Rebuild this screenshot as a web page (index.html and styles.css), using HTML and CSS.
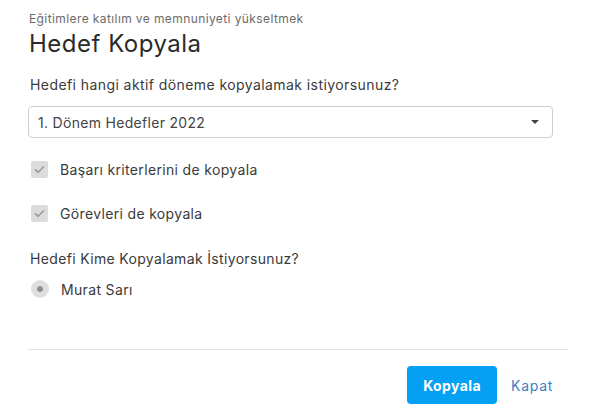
FILE: index.html
```html
<!DOCTYPE html>
<html lang="tr">
<head>
<meta charset="utf-8">
<link rel="stylesheet" href="styles.css">
</head>
<body>
<div class="modal">
  <div class="header">
    <div class="subtitle">Eğitimlere katılım ve memnuniyeti yükseltmek</div>
    <h1 class="title">Hedef Kopyala</h1>
  </div>
  <div class="content">
    <div class="label">Hedefi hangi aktif döneme kopyalamak istiyorsunuz?</div>
    <div class="select">
      <span class="select-text">1. Dönem Hedefler 2022</span>
      <span class="caret"></span>
    </div>
    <div class="check-row first">
      <span class="checkbox">
        <svg width="11" height="9" viewBox="0 0 11 9"><path d="M1.5 4.8 L4.2 7.3 L9.5 1.8" fill="none" stroke="#9a9a9a" stroke-width="1.6" stroke-linecap="round" stroke-linejoin="round"/></svg>
      </span>
      <span class="check-label">Başarı kriterlerini de kopyala</span>
    </div>
    <div class="check-row">
      <span class="checkbox">
        <svg width="11" height="9" viewBox="0 0 11 9"><path d="M1.5 4.8 L4.2 7.3 L9.5 1.8" fill="none" stroke="#9a9a9a" stroke-width="1.6" stroke-linecap="round" stroke-linejoin="round"/></svg>
      </span>
      <span class="check-label">Görevleri de kopyala</span>
    </div>
    <div class="label second">Hedefi Kime Kopyalamak İstiyorsunuz?</div>
    <div class="radio-row">
      <span class="radio"><span class="dot"></span></span>
      <span class="check-label">Murat Sarı</span>
    </div>
  </div>
  <div class="footer">
    <button class="btn-primary">Kopyala</button>
    <a class="btn-link">Kapat</a>
  </div>
</div>
</body>
</html>
```
FILE: styles.css
```css
html, body {
  margin: 0;
  padding: 0;
  background: #ffffff;
}
body {
  font-family: Inter, "Noto Sans", sans-serif;
  color: #333333;
  width: 591px;
  height: 416px;
  overflow: hidden;
}
.modal {
  padding: 11px 23px 0 28px;
}
.header {
  padding-left: 1px;
}
.subtitle {
  font-size: 12px;
  line-height: 16px;
  letter-spacing: 0.4px;
  color: #6b6b6b;
}
.title {
  margin: 2px 0 0 0;
  font-size: 24px;
  line-height: 30px;
  font-weight: 400;
  letter-spacing: 0.5px;
  color: #2b2b2b;
}
.content {
  padding: 0 15px 0 0;
}
.label {
  margin-top: 17px;
  padding-left: 2px;
  font-size: 14px;
  line-height: 18px;
  letter-spacing: 0.42px;
  color: #3a3a3a;
}
.label.second {
  margin-top: 28px;
  letter-spacing: 0.34px;
}
.select {
  margin-top: 12px;
  height: 32px;
  box-sizing: border-box;
  border: 1px solid #c9ced8;
  border-radius: 4px;
  display: flex;
  align-items: center;
  justify-content: space-between;
  padding: 0 13px 0 9px;
}
.select-text {
  font-size: 14px;
  letter-spacing: 0.3px;
  color: #444444;
}
.caret {
  width: 0;
  height: 0;
  border-left: 4px solid transparent;
  border-right: 4px solid transparent;
  border-top: 4px solid #444444;
}
.check-row, .radio-row {
  display: flex;
  align-items: center;
  gap: 12px;
  padding-left: 3px;
  height: 18px;
}
.check-row.first {
  margin-top: 22px;
}
.check-row + .check-row {
  margin-top: 26px;
}
.radio-row {
  margin-top: 12px;
}
.checkbox {
  width: 17px;
  height: 17px;
  background: #dcdcdc;
  border-radius: 2px;
  display: flex;
  align-items: center;
  justify-content: center;
}
.radio {
  width: 18px;
  height: 18px;
  border-radius: 50%;
  background: #dedede;
  display: flex;
  align-items: center;
  justify-content: center;
}
.dot {
  width: 6px;
  height: 6px;
  border-radius: 50%;
  background: #8f8f8f;
}
.check-label {
  font-size: 14px;
  letter-spacing: 0.34px;
  color: #3a3a3a;
}
.footer {
  margin-top: 51px;
  border-top: 1px solid #e3e3e3;
  display: flex;
  justify-content: flex-end;
  align-items: center;
  gap: 14px;
  padding: 16px 15px 0 0;
}
.btn-primary {
  width: 90px;
  height: 38px;
  border: none;
  border-radius: 4px;
  background: #03a0f4;
  color: #ffffff;
  font-family: Inter, "Noto Sans", sans-serif;
  font-size: 14px;
  font-weight: 700;
  letter-spacing: 0.4px;
}
.btn-link {
  font-size: 14px;
  letter-spacing: 0.7px;
  color: #3d80c2;
}
```
